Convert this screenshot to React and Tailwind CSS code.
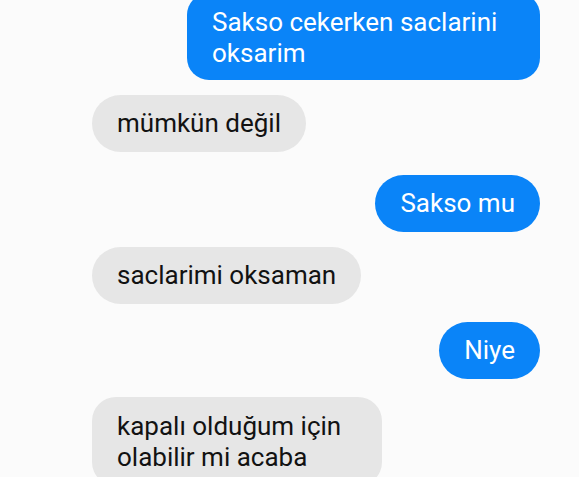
export default function App() {
  const blue = "self-end mr-[39px] bg-[#0a84f8] text-white text-[26px] leading-[31px] px-[25px]";
  const gray = "self-start ml-[92px] bg-[#e6e6e6] text-[#121212] text-[26px] leading-[31px] px-[25px]";
  return (
    <div className="w-[579px] h-[477px] overflow-hidden bg-[#fbfbfb] flex flex-col font-['Roboto',sans-serif]">
      <div className={`${blue} pt-[14px] pb-[11px] mt-[-7px] rounded-[22px] w-[353px]`}>
        Sakso cekerken saclarini oksarim
      </div>
      <div className={`${gray} py-[13px] mt-[15px] rounded-full`}>mümkün değil</div>
      <div className={`${blue} py-[13px] mt-[23px] rounded-full`}>Sakso mu</div>
      <div className={`${gray} py-[13px] mt-[15px] rounded-full`}>saclarimi oksaman</div>
      <div className={`${blue} py-[13px] mt-[18px] rounded-full`}>Niye</div>
      <div className={`${gray} pt-[14px] pb-[13px] mt-[18px] rounded-[24px] w-[290px]`}>
        kapalı olduğum için olabilir mi acaba
      </div>
    </div>
  );
}
